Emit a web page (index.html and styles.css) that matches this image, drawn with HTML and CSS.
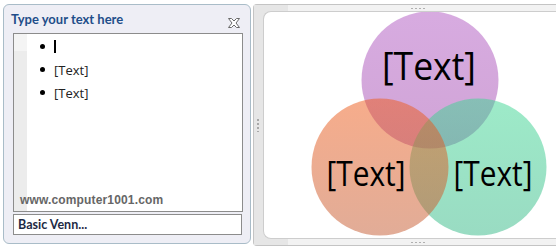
FILE: index.html
```html
<!DOCTYPE html>
<html>
<head>
<meta charset="utf-8">
<link rel="stylesheet" href="styles.css">
</head>
<body>
<div class="pane">
  <div class="pane-head">
    <span class="title">Type your text here</span>
    <svg class="close" width="12" height="10" viewBox="0 0 12 10">
      <path d="M0.5 0.5 H3.5 L6 3 L8.5 0.5 H11.5 L8 5 L11.5 9.5 H8.5 L6 7 L3.5 9.5 H0.5 L4 5 Z" fill="#fff" stroke="#6a6a6a" stroke-width="1" stroke-linejoin="round"/>
    </svg>
  </div>
  <div class="editor">
    <div class="gutter"><div class="gutter-top"></div></div>
    <ul class="bullets">
      <li><span class="caret"></span></li>
      <li>[Text]</li>
      <li>[Text]</li>
    </ul>
    <div class="watermark">www.computer1001.com</div>
  </div>
  <div class="layout-name">Basic Venn...</div>
</div>
<div class="frame">
  <div class="bar-top"><span class="grip-h"></span></div>
  <div class="frame-mid">
    <div class="bar-left"><span class="grip-v"></span></div>
    <div class="canvas">
      <svg class="venn" width="300" height="226" viewBox="0 0 300 226">
        <defs>
          <linearGradient id="gp" x1="0" y1="0" x2="0" y2="1">
            <stop offset="0" stop-color="#b058c2"/>
            <stop offset="1" stop-color="#a24aae"/>
          </linearGradient>
          <linearGradient id="go" x1="0" y1="0" x2="0" y2="1">
            <stop offset="0" stop-color="#ee5a18"/>
            <stop offset="1" stop-color="#c45a30"/>
          </linearGradient>
          <linearGradient id="gg" x1="0" y1="0" x2="0" y2="1">
            <stop offset="0" stop-color="#3cd692"/>
            <stop offset="1" stop-color="#34b886"/>
          </linearGradient>
        </defs>
        <circle cx="166" cy="68" r="68.5" fill="url(#gp)" fill-opacity="0.5"/>
        <circle cx="214" cy="155" r="68.5" fill="url(#gg)" fill-opacity="0.5"/>
        <circle cx="116" cy="155" r="68.5" fill="url(#go)" fill-opacity="0.5"/>
        <text class="vt" x="165" y="68" font-size="38" text-anchor="middle" textLength="94" lengthAdjust="spacingAndGlyphs">[Text]</text>
        <text class="vt" x="102" y="174" font-size="35" text-anchor="middle" textLength="79" lengthAdjust="spacingAndGlyphs">[Text]</text>
        <text class="vt" x="229" y="174" font-size="35" text-anchor="middle" textLength="79" lengthAdjust="spacingAndGlyphs">[Text]</text>
      </svg>
    </div>
  </div>
  <div class="bar-bottom"><span class="grip-h"></span></div>
</div>
</body>
</html>
```
FILE: styles.css
```css
html, body {
  margin: 0;
  padding: 0;
}
body {
  width: 556px;
  height: 250px;
  overflow: hidden;
  background: #ffffff;
  display: flex;
  align-items: flex-start;
  font-family: "Open Sans", "DejaVu Sans", sans-serif;
}
.pane {
  margin-top: 4px;
  margin-left: 3px;
  width: 246px;
  height: 238px;
  border: 1px solid #a9bcc8;
  border-radius: 6px;
  background: #eeeef5;
  display: flex;
  flex-direction: column;
  flex-shrink: 0;
}
.pane-head {
  height: 28px;
  display: flex;
  align-items: flex-start;
  justify-content: space-between;
  padding: 0 10px 0 7px;
}
.title {
  font-family: "Lato", "Open Sans", sans-serif;
  font-weight: bold;
  font-size: 13px;
  color: #1f4e8a;
  margin-top: 6px;
  line-height: 16px;
}
.close {
  margin-top: 13px;
  display: block;
}
.editor {
  margin-left: 9px;
  width: 228px;
  height: 177px;
  border: 1px solid #8c8c8c;
  background: #ffffff;
  display: grid;
  grid-template-columns: 13px 1fr;
  grid-template-rows: 1fr auto;
}
.gutter {
  grid-column: 1;
  grid-row: 1 / 3;
  background: #ececec;
}
.gutter-top {
  height: 17px;
  background: #f4f4f4;
}
.bullets {
  grid-column: 2;
  grid-row: 1;
  list-style: none;
  margin: 0;
  padding: 1px 0 0 13px;
}
.bullets li {
  height: 23px;
  display: flex;
  align-items: center;
  font-family: "Open Sans", sans-serif;
  font-size: 13px;
  color: #222222;
}
.bullets li::before {
  content: "";
  width: 5px;
  height: 5px;
  border-radius: 50%;
  background: #000;
  margin-right: 9px;
}
.caret {
  width: 1.5px;
  height: 13px;
  background: #000;
  margin-left: 0;
}
.watermark {
  grid-column: 1 / 3;
  grid-row: 2;
  padding: 0 0 4px 6px;
  font-family: "Liberation Sans", Arial, sans-serif;
  font-weight: bold;
  font-size: 12px;
  letter-spacing: 0.15px;
  color: #666666;
  line-height: 14px;
}
.layout-name {
  margin: 2px 0 0 9px;
  width: 223px;
  height: 19px;
  border: 1px solid #8c8c8c;
  background: #ffffff;
  padding-left: 4px;
  font-family: "Lato", "Open Sans", sans-serif;
  font-weight: bold;
  font-size: 12.5px;
  line-height: 19px;
  color: #1e2a44;
}
.frame {
  margin-top: 4px;
  margin-left: 2px;
  flex: 1;
  height: 240px;
  border: 1px solid #c4c4c4;
  border-right: none;
  border-radius: 4px 0 0 4px;
  background: #e6e6e6;
  display: flex;
  flex-direction: column;
}
.bar-top, .bar-bottom {
  height: 6px;
  display: flex;
  justify-content: center;
  align-items: center;
  background: linear-gradient(to right, #e6e6e6 34px, #f2f2f2 34px);
}
.grip-h {
  width: 14px;
  height: 1px;
  margin-left: 18px;
  background: repeating-linear-gradient(to right, #b0b0b0 0 2px, transparent 2px 4px);
}
.frame-mid {
  flex: 1;
  display: flex;
}
.bar-left {
  width: 9px;
  display: flex;
  align-items: center;
  justify-content: center;
}
.grip-v {
  width: 2px;
  height: 13px;
  background: repeating-linear-gradient(to bottom, #a8a8a8 0 2px, transparent 2px 4px);
  margin-right: 2px;
}
.canvas {
  flex: 1;
  background: #ffffff;
  border: 1px solid #cdcdcd;
  border-right: none;
  border-radius: 8px 0 0 8px;
  overflow: hidden;
}
.venn {
  display: block;
}
.vt {
  font-family: "Open Sans", "DejaVu Sans", sans-serif;
  font-weight: 400;
  fill: #000000;
}
```
